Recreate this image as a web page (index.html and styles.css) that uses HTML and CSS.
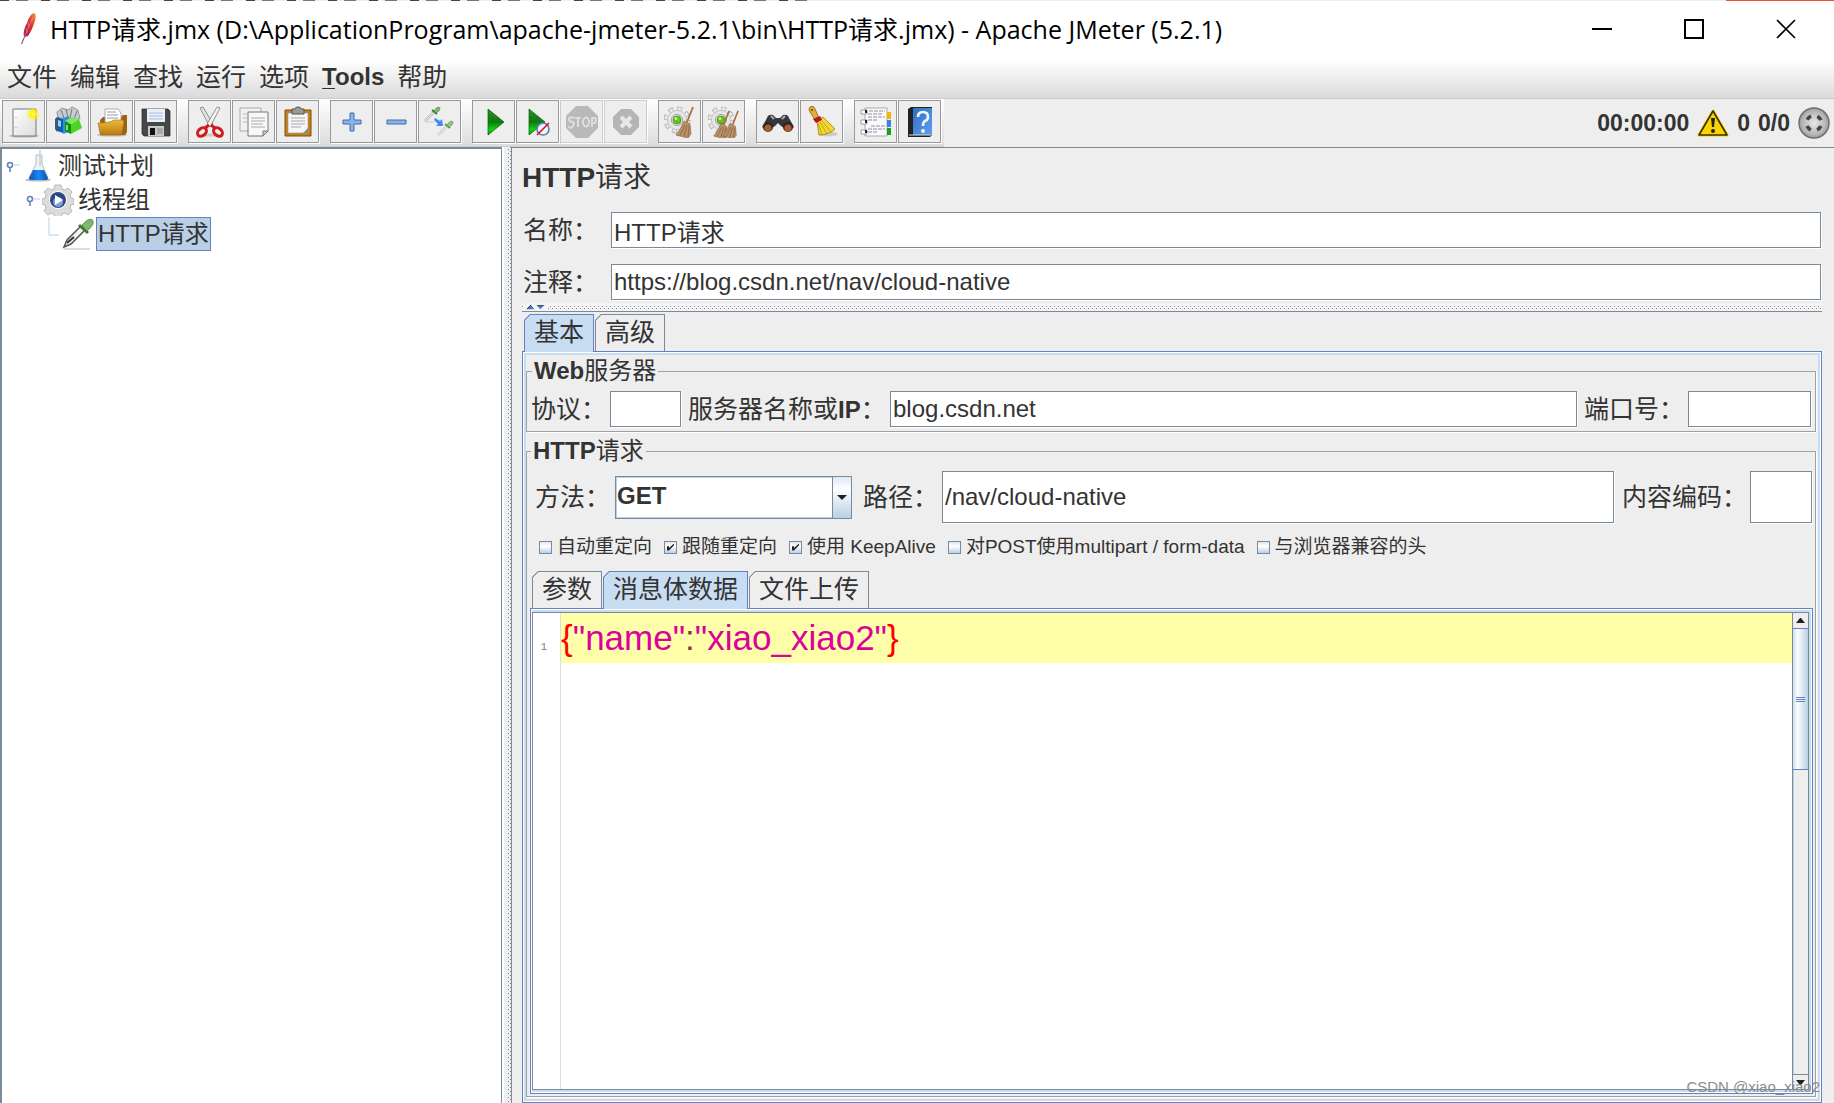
FILE: index.html
```
<!DOCTYPE html>
<html lang="zh-CN">
<head>
<meta charset="utf-8">
<meta name="viewport" content="width=device-width, initial-scale=1">
<title>HTTP请求.jmx - Apache JMeter (5.2.1)</title>
<link rel="stylesheet" href="styles.css">
</head>
<body>
<div class="window">
  <div class="desktop-edge"><span class="edge-text"></span><span class="edge-accent"></span></div>
  <header class="titlebar">
    <svg class="feather" viewBox="0 0 20 32" aria-hidden="true">
      <defs><linearGradient id="fe" x1="1" y1="0" x2="0" y2="1"><stop offset="0" stop-color="#f69923"/><stop offset=".35" stop-color="#d9333f"/><stop offset=".6" stop-color="#c2213f"/><stop offset="1" stop-color="#6b2a7c"/></linearGradient></defs>
      <path d="M15 0c2 1 2 4 1 8-2 6-4 11-7 15l-3 1-3 7-1 0 3-7c-1-4 0-9 3-14 2-6 4-9 7-10z" fill="url(#fe)"/>
      <path d="M14 4 5 25M9 9l1 5M7 15l1 5" stroke="#fff" stroke-width=".6" fill="none" opacity=".5"/>
    </svg>
    <h1 class="title">HTTP请求.jmx (D:\ApplicationProgram\apache-jmeter-5.2.1\bin\HTTP请求.jmx) - Apache JMeter (5.2.1)</h1>
    <div class="window-controls">
      <button type="button" aria-label="最小化"><svg viewBox="0 0 20 20"><path d="M0 10h20" stroke-width="2"/></svg></button>
      <button type="button" aria-label="最大化"><svg viewBox="0 0 20 20"><path d="M1 1h18v18H1z" stroke-width="2"/></svg></button>
      <button type="button" aria-label="关闭"><svg viewBox="0 0 20 20"><path d="M1 1l18 18M19 1 1 19" stroke-width="1.6"/></svg></button>
    </div>
  </header>

  <nav class="menubar">
    <button type="button">文件</button>
    <button type="button">编辑</button>
    <button type="button">查找</button>
    <button type="button">运行</button>
    <button type="button">选项</button>
    <button type="button" class="latin"><u>T</u>ools</button>
    <button type="button">帮助</button>
  </nav>

  <div class="toolbar">
    <div class="tools">
      <div class="group">
        <button type="button" aria-label="新建"><svg viewBox="0 0 32 32">
          <defs><radialGradient id="glow"><stop offset="0" stop-color="#fffbb0"/><stop offset=".35" stop-color="#fff200"/><stop offset="1" stop-color="#fff200" stop-opacity="0"/></radialGradient>
          <linearGradient id="sheet" x1="0" y1="0" x2="1" y2="1"><stop offset="0" stop-color="#fff"/><stop offset="1" stop-color="#dcdcdc"/></linearGradient></defs>
          <ellipse cx="16" cy="30" rx="15" ry="1.6" fill="#bbb"/><path d="M5 3h23v27H5z" fill="url(#sheet)" stroke="#777"/><path d="M8 11v1M8 21v1" stroke="#999"/><circle cx="25" cy="8" r="7" fill="url(#glow)"/></svg></button>
        <button type="button" aria-label="模板"><svg viewBox="0 0 32 32">
          <path d="M6 12 5 6l5-4 6 2 4-3 6 3 2 9z" fill="#c8ccd0" stroke="#777" stroke-width=".7"/><path d="M9 4l3 8M14 3l2 9M20 3l-2 9M25 5l-3 8" stroke="#70787e"/>
          <path d="M3 13l2-2v15l-2-3z" fill="#555"/><path d="M5 11l6 2v14l-6-2z" fill="#0a5fae"/><path d="M11 12l6-2v16l-6 2z" fill="#2a93e0"/><path d="M6 14l3 1v6l-3-1z" fill="#9bd0f5"/>
          <path d="M13 15l6 3v10l-6-3z" fill="#1b8c12"/><path d="M19 18l8-5 3 9-11 6z" fill="#4fd32b"/><path d="M13 15l7-4 7 2-8 5z" fill="#83e561"/><path d="M15 19v5" stroke="#a6f08d" stroke-width="1.5"/></svg></button>
        <button type="button" aria-label="打开"><svg viewBox="0 0 32 32">
          <defs><linearGradient id="fold" x1="0" y1="0" x2="0" y2="1"><stop offset="0" stop-color="#efb93f"/><stop offset="1" stop-color="#b97a0c"/></linearGradient></defs>
          <ellipse cx="16" cy="29" rx="15" ry="1.6" fill="#bbb"/><path d="M4 14l3-3h18l2-2h4v17l-2 3H5z" fill="#9a6410"/><path d="M9 3h13l3 4v11H9z" fill="#fff" stroke="#999" stroke-width=".8"/><path d="M11 6h9M11 9h11M11 12h11" stroke="#999"/>
          <path d="M2 17q12 0 16-3h9l1 2-2 12q-1 1-2 1H6q-2 0-2-2z" fill="url(#fold)" stroke="#9a6410" stroke-width=".6"/></svg></button>
        <button type="button" aria-label="保存"><svg viewBox="0 0 32 32">
          <path d="M2 3h26l2 2v25H4l-2-2z" fill="#45474a" stroke="#222" stroke-width=".7"/><path d="M7 3h18v13H7z" fill="#e8f0f9"/><path d="M9 7h14M9 10h14M9 13h14" stroke="#a9bfd8"/><path d="M8 20h16v10H8z" fill="#c9c9c9"/><path d="M10 22h5v7h-5z" fill="#111"/><path d="M17 22h6v6h-6z" fill="#aaa"/></svg></button>
      </div>
      <div class="group">
        <button type="button" aria-label="剪切"><svg viewBox="0 0 32 32">
          <ellipse cx="16" cy="29" rx="12" ry="1.6" fill="#ccc"/><path d="M6 2l3-1 10 17-3 3z" fill="#e3e3e3" stroke="#777" stroke-width=".8"/><path d="M26 2l-3-1-10 17 3 3z" fill="#f3f3f3" stroke="#777" stroke-width=".8"/>
          <g fill="none" stroke="#cf1b1b" stroke-width="3"><ellipse cx="8" cy="26" rx="5" ry="3.6" transform="rotate(-40 8 26)"/><ellipse cx="24" cy="26" rx="5" ry="3.6" transform="rotate(40 24 26)"/><path d="M11 22l4-3M21 22l-4-3"/></g></svg></button>
        <button type="button" aria-label="复制"><svg viewBox="0 0 32 32">
          <path d="M2 2h21v23H2z" fill="#f1f1f1" stroke="#aaa"/><path d="M5 8h4M5 12h4M5 16h4" stroke="#bbb"/><path d="M10 6h20v19l-5 5H10z" fill="#f8f8f8" stroke="#777"/><path d="M30 25h-5v5z" fill="#ccc" stroke="#777"/><path d="M13 12h14M13 15h14M13 18h12M13 21h14" stroke="#aaa"/></svg></button>
        <button type="button" aria-label="粘贴"><svg viewBox="0 0 32 32">
          <path d="M3 4h26v26H3z" fill="#c47f1d" stroke="#7d4f0c"/><path d="M6 7h20v20H6z" fill="#f6f6f6" stroke="#999" stroke-width=".6"/><path d="M26 22l-5 5h5z" fill="#888"/><path d="M10 3h3q0-2 3-2t3 2h3v5H10z" fill="#999b96" stroke="#555"/><path d="M9 12h14M9 15h14M9 18h14M9 21h10" stroke="#aaa"/></svg></button>
      </div>
      <div class="group">
        <button type="button" aria-label="展开"><svg viewBox="0 0 32 32"><path d="M14 7h4v7h7v4h-7v7h-4v-7H7v-4h7z" fill="#8db3e2" stroke="#3f6fb0"/></svg></button>
        <button type="button" aria-label="折叠"><svg viewBox="0 0 32 32"><path d="M7 14h19v4H7z" fill="#8db3e2" stroke="#3f6fb0"/></svg></button>
        <button type="button" aria-label="切换"><svg viewBox="0 0 32 32">
          <path d="M1 15 10 6" stroke="#888" stroke-width="2.400"/><path d="M1 15 10 6" stroke="#f4f4f4" stroke-width="1.200"/><path d="M8 4l5 4" stroke="#3f7a2c" stroke-width="2"/><path d="M10 5q2-4 5-4 2 1 0 4l-3 2z" fill="#7fb672" stroke="#4a8a3a" stroke-width=".6"/><path d="M1 16h9" stroke="#ccc"/>
          <path d="M11 12l5 3 2-2 1 7h-7l2-2-4-4z" fill="#3f8af5"/>
          <path d="M14 29l9-9" stroke="#aaa" stroke-width="2.400"/><path d="M14 29l9-9" stroke="#f4f4f4" stroke-width="1.200"/><path d="M21 18l5 4" stroke="#5d9a4c" stroke-width="2"/><path d="M23 19q2-4 5-4 2 1 0 4l-3 2z" fill="#93c487" stroke="#5d9a4c" stroke-width=".6"/></svg></button>
      </div>
      <div class="group">
        <button type="button" aria-label="启动"><svg viewBox="0 0 32 32">
          <defs><linearGradient id="go" x1="0" y1="0" x2="0" y2="1"><stop offset="0" stop-color="#2f8f2c"/><stop offset=".5" stop-color="#0e7a0e"/><stop offset=".8" stop-color="#0fd80f"/><stop offset="1" stop-color="#0a8a0a"/></linearGradient></defs>
          <path d="M10 3v26l16-13z" fill="url(#go)" stroke="#0b5c0b" stroke-width=".7"/></svg></button>
        <button type="button" aria-label="不停顿开始"><svg viewBox="0 0 32 32"><path d="M7 3v26l16-13z" fill="url(#go)" stroke="#0b5c0b" stroke-width=".7"/><circle cx="21" cy="23" r="6" fill="#eef4fb" fill-opacity=".85" stroke="#4a7fc1" stroke-width="1.6"/><path d="M15 29 27 17" stroke="#e01010" stroke-width="1.6"/></svg></button>
        <button type="button" disabled aria-label="停止"><svg viewBox="0 0 32 32"><path d="M10 0h12l10 10v12L22 32H10L0 22V10z" fill="#b9b9b9"/><g fill="none" stroke="#dedede" stroke-width="2"><path d="M8 12q-5-2-5 1t3 3 1 4-5 0M9 12h6M12 12v9M26 21v-9h3q2 2 0 5h-3"/><ellipse cx="20" cy="16" rx="3" ry="4.500"/></g></svg></button>
        <button type="button" disabled aria-label="关闭线程"><svg viewBox="0 0 32 32"><path d="M11 3h10l8 8v10l-8 8H11l-8-8V11z" fill="#b5b5b5"/><path d="M11 11l10 10M21 11 11 21" stroke="#e8e8e8" stroke-width="4"/></svg></button>
      </div>
      <div class="group">
        <button type="button" aria-label="清除"><svg viewBox="0 0 32 32">
          <defs><g id="cog"><circle cx="13" cy="14" r="11" fill="none" stroke="#a9a9a9" stroke-width="5" stroke-dasharray="4.600 4.040"/><circle cx="13" cy="14" r="11" fill="none" stroke="#e9e9e9" stroke-width="3.400" stroke-dasharray="3.400 5.240" stroke-dashoffset="-.6"/><circle cx="13" cy="14" r="9.600" fill="#e6e6e6" stroke="#bbb" stroke-width=".8"/><circle cx="13" cy="14" r="5.500" fill="#f4f4f4" stroke="#999"/><circle cx="13" cy="14" r="4" fill="#64c31e" stroke="#367a0a" stroke-width=".6"/><circle cx="12" cy="12.600" r="1.500" fill="#c3f28f"/></g>
          <g id="broom"><path d="M29 1 23 16" stroke="#a9713c" stroke-width="1.800"/><path d="M20 15l6 3 1 10-3 4-12-3q5-6 8-14z" fill="#b99268" stroke="#7e5a34" stroke-width=".6"/><path d="M21 19l-5 10M23 19l-3 11M25 20l-1 11" stroke="#7e5a34" stroke-width=".7"/></g></defs>
          <use href="#cog"/><use href="#broom"/></svg></button>
        <button type="button" aria-label="清除全部"><svg viewBox="0 0 32 32"><use href="#cog"/><g transform="translate(-5 4) scale(.9)"><use href="#broom"/></g><g transform="translate(4 4) scale(.9)"><use href="#broom"/></g></svg></button>
      </div>
      <div class="group">
        <button type="button" aria-label="查找"><svg viewBox="0 0 32 32">
          <path d="M5 12q1-4 6-3l3 3h4l3-3q5-1 6 3l5 9-6 4-7-5-3-3-3 3-7 5-6-4z" fill="#35373a"/><path d="M9 10l3 3M23 10l-3 3" stroke="#aaa" stroke-width="2"/><circle cx="6" cy="21" r="5" fill="#26282a"/><circle cx="26" cy="21" r="5" fill="#26282a"/><circle cx="6" cy="22" r="3.600" fill="#b35a2c"/><circle cx="26" cy="22" r="3.600" fill="#b35a2c"/></svg></button>
        <button type="button" aria-label="重置搜索"><svg viewBox="0 0 32 32">
          <ellipse cx="22" cy="28" rx="10" ry="2.600" fill="#ccc"/><path d="M4 1q4-2 5 2l4 9-4 2-5-8q-2-3 0-5z" fill="#e5ad31" stroke="#8d5c0b" stroke-width=".8"/><circle cx="6" cy="4" r="1" fill="#6b4508"/><path d="M11 15l6-4 12 12q-6 6-16 6z" fill="#f3d835" stroke="#9e7d0c" stroke-width=".8"/><path d="M7 13l7-3 2 4-6 3z" fill="#b5122c"/><path d="M12 17l4 11M14 16l7 12M16 15l9 11" stroke="#b8950f" stroke-width=".8"/></svg></button>
      </div>
      <div class="group">
        <button type="button" aria-label="函数助手"><svg viewBox="0 0 32 32">
          <path d="M5 2h22v28H5z" fill="#fafafa" stroke="#aaa"/><path d="M27 6h4v7h-4z" fill="#f5b400"/><path d="M27 14h4v7h-4z" fill="#3b82f0"/><path d="M27 22h4v7h-4z" fill="#19a01d"/><path d="M9 5h16M8 8h15M8 11h17M8 14h10M11 20h14M8 23h17M8 26h9" stroke="#8b8fa8" stroke-dasharray="4 1"/><g fill="#fff" stroke="#888" stroke-width=".8"><path d="M1 4h6v4H1zM1 14h6v4H1zM1 24h6v4H1z"/></g><path d="M5 4h2v3H5zM5 14h2v3H5zM5 24h2v3H5z" fill="#222"/></svg></button>
        <button type="button" aria-label="帮助"><svg viewBox="0 0 32 32">
          <defs><linearGradient id="bk" x1="0" y1="0" x2="1" y2="1"><stop offset="0" stop-color="#2f6fc4"/><stop offset="1" stop-color="#5e9fec"/></linearGradient></defs>
          <path d="M4 3l3-2h21v28l-2 2H4z" fill="#222"/><path d="M9 2h19v27H9z" fill="url(#bk)"/><path d="M5 29h22" stroke="#ddd"/><path d="M14 11q0-5 5-5t5 5q0 3-3 4-2 1-2 5" fill="none" stroke="#f2f6fb" stroke-width="2.600"/><circle cx="19" cy="25" r="2" fill="#f2f6fb"/></svg></button>
      </div>
    </div>
    <div class="status">
      <output>00:00:00</output>
      <svg viewBox="0 0 32 28" class="warn" aria-hidden="true"><path d="M16 2 30 26H2z" fill="#f6d000" stroke="#f6d000" stroke-width="3" stroke-linejoin="round"/><path d="M16 2 30 26H2z" fill="#fbd400" stroke="#3b3205" stroke-width="1.600" stroke-linejoin="round"/><path d="M14 9h4l-1 9h-2z" fill="#222"/><circle cx="16" cy="22" r="2" fill="#222"/></svg>
      <output>0</output>
      <output>0/0</output>
      <svg viewBox="0 0 32 32" class="idle" aria-hidden="true"><defs><radialGradient id="idl"><stop offset="0" stop-color="#e8e8e8"/><stop offset=".8" stop-color="#b4b4b4"/><stop offset="1" stop-color="#999"/></radialGradient></defs><circle cx="16" cy="16" r="15" fill="url(#idl)" stroke="#707070" stroke-width="1.500"/><circle cx="16" cy="16" r="7.500" fill="none" stroke="#444" stroke-width="3.600" stroke-dasharray="5.400 6.380" stroke-dashoffset="-3.190"/></svg>
    </div>
  </div>

  <main class="split">
    <aside class="tree" aria-label="测试计划">
      <ul>
        <li class="depth-1">
          <svg class="handle" viewBox="0 0 14 14"><path d="M8 6h6" stroke="#b8cfe5"/><circle cx="4" cy="6" r="2.500" fill="#fff" stroke="#6382bf" stroke-width="1.600"/><path d="M4 8v5" stroke="#6382bf" stroke-width="1.600"/></svg>
          <svg class="node" viewBox="0 0 32 32"><defs><linearGradient id="fl" x1="0" y1="0" x2="1" y2="0"><stop offset="0" stop-color="#0b54b5"/><stop offset=".5" stop-color="#1c86f2"/><stop offset="1" stop-color="#0b54b5"/></linearGradient></defs><ellipse cx="16" cy="30" rx="13" ry="1.600" fill="#bbb"/><path d="M14 5h6v9l6 14q0 2-2 2H9q-2 0-2-2l7-14z" fill="#eef3f8" stroke="#b5bcc4"/><path d="M11 20h11l4 8q0 2-2 2H9q-2 0-2-2z" fill="url(#fl)"/><path d="M18 0v16" stroke="#ccc" stroke-width="1.500"/></svg>
          <span>测试计划</span>
        </li>
        <li class="depth-2">
          <svg class="handle" viewBox="0 0 14 14"><path d="M8 6h6" stroke="#b8cfe5"/><circle cx="4" cy="6" r="2.500" fill="#fff" stroke="#6382bf" stroke-width="1.600"/><path d="M4 8v5" stroke="#6382bf" stroke-width="1.600"/></svg>
          <svg class="node" viewBox="0 0 32 32"><g stroke="#aaa" stroke-width=".8" fill="#dcdcdc"><path d="M13 1h6l1 4 3 1 3-2 4 4-2 3 1 3 3 1v5l-3 1-1 3 2 3-4 4-3-2-3 1-1 3h-6l-1-3-3-1-3 2-4-4 2-3-1-3-3-1v-5l3-1 1-3-2-3 4-4 3 2 3-1z"/></g><circle cx="16" cy="16" r="9" fill="#fff"/><circle cx="16" cy="16" r="8" fill="#2f4a80"/><circle cx="16" cy="18" r="5" fill="#7ea3d8"/><path d="M13 11v10l8-5z" fill="#fff"/></svg>
          <span>线程组</span>
        </li>
        <li class="depth-3">
          <svg class="handle" viewBox="0 0 14 34"><path d="M4 0v18h10" fill="none" stroke="#b8cfe5"/></svg>
          <svg class="node" viewBox="0 0 32 32"><path d="M2 31h26" stroke="#ddd" stroke-width="2"/><path d="M2 29l3-7L19 8l4 4L9 26z" fill="#f4f4f4" stroke="#555" stroke-width="1.500"/><path d="M5 25l7-6" stroke="#333" stroke-width="2"/><path d="M17 7l9 8" stroke="#3f7a2c" stroke-width="3"/><path d="M20 7q5-6 9-6 3 1 2 5-2 4-6 7z" fill="#7fb672" stroke="#4a8a3a" stroke-width=".8"/></svg>
          <span class="selected">HTTP请求</span>
        </li>
      </ul>
    </aside>
    <div class="divider"></div>

    <section class="editor">
      <h2><b>HTTP</b>请求</h2>
      <div class="field"><label for="name">名称：</label><input id="name" type="text" value="HTTP请求"></div>
      <div class="field"><label for="comment">注释：</label><input id="comment" type="text" value="https://blog.csdn.net/nav/cloud-native"></div>
      <div class="hdivider"><svg viewBox="0 0 24 6" aria-hidden="true"><path d="M1 5l5-5 4 5zM13 0h9l-5 5z" fill="#5070c0"/><path d="M1 5l5-5M13 0h9" stroke="#222"/></svg></div>

      <div class="tabs" role="tablist">
        <button type="button" role="tab" aria-selected="true">基本</button>
        <button type="button" role="tab" aria-selected="false">高级</button>
      </div>
      <div class="tab-panel outer">
        <fieldset class="box">
          <legend><b>Web</b>服务器</legend>
          <div class="server-row">
            <label for="protocol">协议：</label><input id="protocol" type="text">
            <label for="host">服务器名称或<b>IP</b>：</label><input id="host" type="text" value="blog.csdn.net">
            <label for="port">端口号：</label><input id="port" type="text">
          </div>
        </fieldset>
        <fieldset class="box grow">
          <legend><b>HTTP</b>请求</legend>
          <div class="request-row">
            <label for="method">方法：</label>
            <span class="combo"><select id="method"><option>GET</option><option>POST</option></select><i></i></span>
            <label for="path">路径：</label><input id="path" type="text" value="/nav/cloud-native">
            <label for="encoding">内容编码：</label><input id="encoding" type="text">
          </div>
          <div class="checks">
            <label><input type="checkbox">自动重定向</label>
            <label><input type="checkbox" checked>跟随重定向</label>
            <label><input type="checkbox" checked>使用 KeepAlive</label>
            <label><input type="checkbox">对POST使用multipart / form-data</label>
            <label><input type="checkbox">与浏览器兼容的头</label>
          </div>
          <div class="tabs inner-tabs" role="tablist">
            <button type="button" role="tab" aria-selected="false">参数</button>
            <button type="button" role="tab" aria-selected="true">消息体数据</button>
            <button type="button" role="tab" aria-selected="false">文件上传</button>
          </div>
          <div class="tab-panel inner">
            <div class="code-area">
              <div class="gutter">1</div>
              <div class="code" role="textbox" aria-multiline="true" aria-label="消息体数据" contenteditable="true" spellcheck="false"><div class="line"><span class="brace">{</span><span class="str">"name"</span><span class="colon">:</span><span class="str">"xiao_xiao2"</span><span class="brace">}</span></div></div>
              <div class="scrollbar">
                <button type="button" aria-label="向上滚动"><svg viewBox="0 0 9 5"><path d="M0 5h9L5 0H4z"/></svg></button>
                <div class="thumb"><i></i><i></i><i></i></div>
                <div class="track"></div>
                <button type="button" aria-label="向下滚动"><svg viewBox="0 0 9 5"><path d="M0 0h9L5 5H4z"/></svg></button>
              </div>
            </div>
          </div>
        </fieldset>
      </div>
    </section>
  </main>
  <div class="watermark">CSDN @xiao_xiao2</div>
</div>
</body>
</html>
```
FILE: styles.css
```
:root {
  --panel: #eeeeee;
  --line: #7a8a99;
  --blue: #6382bf;
  --tint: #c8ddf2;
  --text: #333333;
  --dots: url("data:image/svg+xml,%3Csvg xmlns='http://www.w3.org/2000/svg' width='4' height='4'%3E%3Cpath d='M0 0h1v1H0zM2 2h1v1H2z' fill='%237a8a99'/%3E%3C/svg%3E");
}

* { box-sizing: border-box; }

body {
  margin: 0;
  background: var(--panel);
  color: var(--text);
  font: 24px/28px "Liberation Sans", "Noto Sans CJK SC", sans-serif;
}

button, input, select { font: inherit; color: inherit; }
button { padding: 0; border: 0; background: none; }
svg { display: block; flex: none; }

.window {
  position: relative;
  display: flex;
  flex-direction: column;
  min-height: 100vh;
}

.desktop-edge { display: flex; justify-content: space-between; height: 1px; background: #eee; }
.edge-text { width: 44%; background: repeating-linear-gradient(90deg, #444 0 9px, #eee 9px 16px, #777 16px 28px, #eee 28px 41px); }
.edge-accent { width: 108px; background: #f04e30; }

/* Title bar */
.titlebar { display: flex; align-items: center; height: 59px; padding-bottom: 4px; background: #fff; color: #000; }
.feather { width: 20px; height: 32px; margin: 0 11px 0 19px; }
.title {
  flex: 1;
  margin: 0;
  font: 25px/32px "Open Sans", "Noto Sans CJK SC", sans-serif;
  white-space: nowrap;
}
.window-controls { display: flex; padding-right: 2px; }
.window-controls button { display: grid; place-items: center; width: 92px; height: 54px; }
.window-controls svg { width: 20px; height: 20px; fill: none; stroke: #000; }

/* Menu bar */
.menubar {
  display: flex;
  gap: 13px;
  height: 39px;
  padding: 3px 7px 8px;
  background: linear-gradient(#fff, #dadada);
  border-bottom: 1px solid #ccc;
}
.menubar button { font-size: 25px; line-height: 28px; }
.menubar .latin { font-size: 24px; font-weight: bold; }
.menubar u { text-underline-offset: 3px; text-decoration-thickness: 1px; }

/* Tool bar */
.toolbar { display: flex; justify-content: space-between; height: 48px; }
.tools {
  display: flex;
  gap: 11px;
  padding: 1px 3px 4px 2px;
  background: linear-gradient(#fff, #dcdcdc);
  border-bottom: 1px solid #ccc;
}
.group { display: flex; gap: 1px; }
.group button {
  display: grid;
  place-items: center;
  width: 43px;
  height: 43px;
  background: var(--panel);
  border: 1px solid #999;
  box-shadow: 1px 1px #fff;
}
.group button:disabled { border-color: #ccc; }
.group svg { width: 32px; height: 32px; }
.status { display: flex; align-items: center; gap: 8px; padding-right: 4px; font-size: 23px; font-weight: bold; }
.warn { width: 32px; height: 28px; }
.status .idle { width: 32px; height: 32px; }

/* Main split */
.split { display: flex; flex: 1; }
.tree {
  width: 502px;
  background: #fff;
  border: 2px solid var(--line);
  border-right-width: 1px;
  border-bottom: 0;
}
.tree ul { list-style: none; margin: 0; padding: 0; }
.tree li { display: flex; align-items: center; height: 34px; }
.tree span { padding: 2px 1px; border: 1px solid transparent; }
.tree .selected { background: #b8cfe5; border-color: var(--blue); }
.handle { width: 14px; height: 14px; }
.node { width: 32px; height: 32px; }
.depth-1 { padding-left: 4px; }
.depth-2 { padding-left: 24px; }
.depth-3 { padding-left: 43px; }
.depth-1 .node, .depth-2 .node { margin-left: 2px; }
.depth-1 span, .depth-2 span { margin-left: 2px; }
.depth-3 .handle { height: 34px; }
.depth-3 .node { margin-left: 3px; }
.depth-3 span { margin-left: 2px; }
.divider {
  width: 9px;
  border-left: 2px solid #fff;
  background: var(--dots) 4px 2px / 4px 4px repeat-y, var(--panel);
}

/* Editor pane */
.editor {
  display: flex;
  flex: 1;
  flex-direction: column;
  min-width: 0;
  padding: 12px 12px 0 10px;
  border: solid var(--line);
  border-width: 1px 0 0 1px;
}
h2 { margin: 0 0 16px; font-size: 28px; font-weight: normal; line-height: 36px; }
.field { display: flex; align-items: center; margin-bottom: 16px; }
.field label { width: 89px; padding-left: 1px; font-size: 25px; }
.field + .field { margin-bottom: 3px; }

input[type="text"] {
  min-width: 0;
  height: 36px;
  padding: 0 2px;
  border: 1px solid var(--line);
  border-radius: 0;
  background: #fff;
  box-shadow: 1px 1px #fff;
  outline: 0;
}
.field input { flex: 1; margin-right: 1px; }

.hdivider {
  height: 9px;
  padding: 2px 2px;
  border-bottom: 1px solid var(--line);
  background: var(--dots) 24px 3px / 4px 4px repeat-x, #f4f4f4;
}
.hdivider svg { width: 24px; height: 5px; background: #f4f4f4; }

/* Tabs */
.tabs { display: flex; gap: 1px; padding: 2px 0 0 2px; }
.tabs button {
  height: 37px;
  padding: 0 9px 3px;
  border: 1px solid var(--line);
  border-bottom: 0;
  font-size: 25px;
  line-height: 32px;
  background: linear-gradient(135deg, var(--line) 5px, var(--panel) 5px) border-box;
  clip-path: polygon(6px 0, 100% 0, 100% 100%, 0 100%, 0 6px);
}
.tabs [aria-selected="true"] {
  height: 38px;
  margin-bottom: -1px;
  z-index: 1;
  border-color: var(--blue);
  background: linear-gradient(135deg, var(--blue) 5px, var(--tint) 5px) border-box;
}
.tab-panel {
  display: flex;
  flex: 1;
  flex-direction: column;
  border: 1px solid var(--blue);
  box-shadow: inset 0 0 0 1px #fff, inset 0 0 0 3px var(--tint);
}
.outer { gap: 5px; padding: 5px 5px 5px 3px; }

.box {
  min-width: 0;
  margin: 0;
  padding: 6px 4px 4px;
  border: 1px solid #a0a0a0;
  box-shadow: 1px 1px #fff;
}
.box legend { margin-left: 1px; padding: 0 2px; height: 28px; }
.grow { display: flex; flex: 1; flex-direction: column; padding: 6px 2px 2px 3px; }

.server-row { display: flex; align-items: center; }
.server-row label { font-size: 25px; white-space: nowrap; }
.server-row b, legend b { font-size: 24px; }
.server-row label[for="protocol"] { width: 79px; }
.server-row label[for="host"] { width: 209px; padding-left: 7px; }
.server-row label[for="port"] { width: 111px; padding-left: 7px; }
#protocol { width: 71px; }
#host { flex: 1; }
#port { width: 123px; }

.request-row { display: flex; align-items: center; padding: 0 1px 0 5px; }
.request-row label { font-size: 25px; white-space: nowrap; }
.request-row label[for="method"] { width: 80px; }
.request-row label[for="path"] { width: 90px; padding-left: 11px; }
.request-row label[for="encoding"] { width: 136px; padding-left: 8px; }
.request-row input[type="text"] { height: 52px; }
#path { flex: 1; }
#encoding { width: 62px; }
.combo { position: relative; display: flex; width: 237px; height: 43px; }
.combo select {
  flex: 1;
  appearance: none;
  padding: 0 3px 2px 1px;
  border: 1px solid var(--line);
  border-radius: 0;
  box-shadow: inset 0 0 0 1px #b8cfe5;
  background: #fff;
  font-weight: bold;
}
.combo i {
  position: absolute;
  inset: 1px 1px 1px auto;
  display: grid;
  place-items: center;
  width: 19px;
  border-left: 1px solid var(--line);
  background: linear-gradient(#dde8f3, #fff 30%, #b8cfe5);
  pointer-events: none;
}
.combo i::after { content: ""; border: 5px solid transparent; border-top-color: #222; border-bottom: 0; }

.checks { display: flex; gap: 12px; align-items: center; height: 48px; padding-left: 9px; font-size: 19px; }
.checks label { display: flex; align-items: center; gap: 5px; white-space: nowrap; }
.checks input {
  appearance: none;
  display: grid;
  place-items: center;
  width: 13px;
  height: 13px;
  margin: 0;
  border: 1px solid var(--line);
  background: linear-gradient(#dde8f3, #fff 40%, #b8cfe5);
}
.checks input:checked::after {
  content: "";
  width: 7px;
  height: 7px;
  background: #222;
  clip-path: polygon(0 40%, 28% 40%, 28% 65%, 100% 0, 100% 25%, 28% 100%, 0 100%);
}

.inner-tabs { padding: 0 0 0 2px; }
.inner { padding: 3px 3px 3px 1px; }
.code-area {
  display: flex;
  flex: 1;
  border: 1px solid var(--line);
  background: #fff;
}
.gutter {
  width: 28px;
  padding: 20px 13px 0 0;
  border-right: 1px solid #ddd;
  color: #808080;
  font: 11px/28px "Liberation Mono", monospace;
  text-align: right;
}
.code { flex: 1; min-width: 0; outline: 0; font-size: 35px; line-height: 50px; }
.line { height: 50px; background: #ffffaa; }
.brace { color: #ff0000; }
.str { color: #dc009c; }
.colon { color: #804040; }

.scrollbar { display: flex; flex-direction: column; width: 16px; border-left: 1px solid var(--line); background: var(--panel); }
.scrollbar button { display: grid; place-items: center; height: 15px; }
.scrollbar button:last-child { border-top: 1px solid var(--line); }
.scrollbar svg { width: 9px; height: 5px; fill: #222; }
.thumb {
  display: flex;
  flex-direction: column;
  align-items: center;
  justify-content: center;
  gap: 1px;
  height: 142px;
  border: solid var(--blue);
  border-width: 1px 0;
  background: linear-gradient(90deg, #c8ddf2, #fff 30%, #b8cfe5);
}
.thumb i { width: 9px; height: 1px; background: var(--blue); }
.track { flex: 1; box-shadow: inset 1px 0 #b8cfe5; }

.watermark {
  position: absolute;
  right: 14px;
  bottom: 2px;
  color: #8c8c8c;
  font-size: 15px;
  pointer-events: none;
}
```
